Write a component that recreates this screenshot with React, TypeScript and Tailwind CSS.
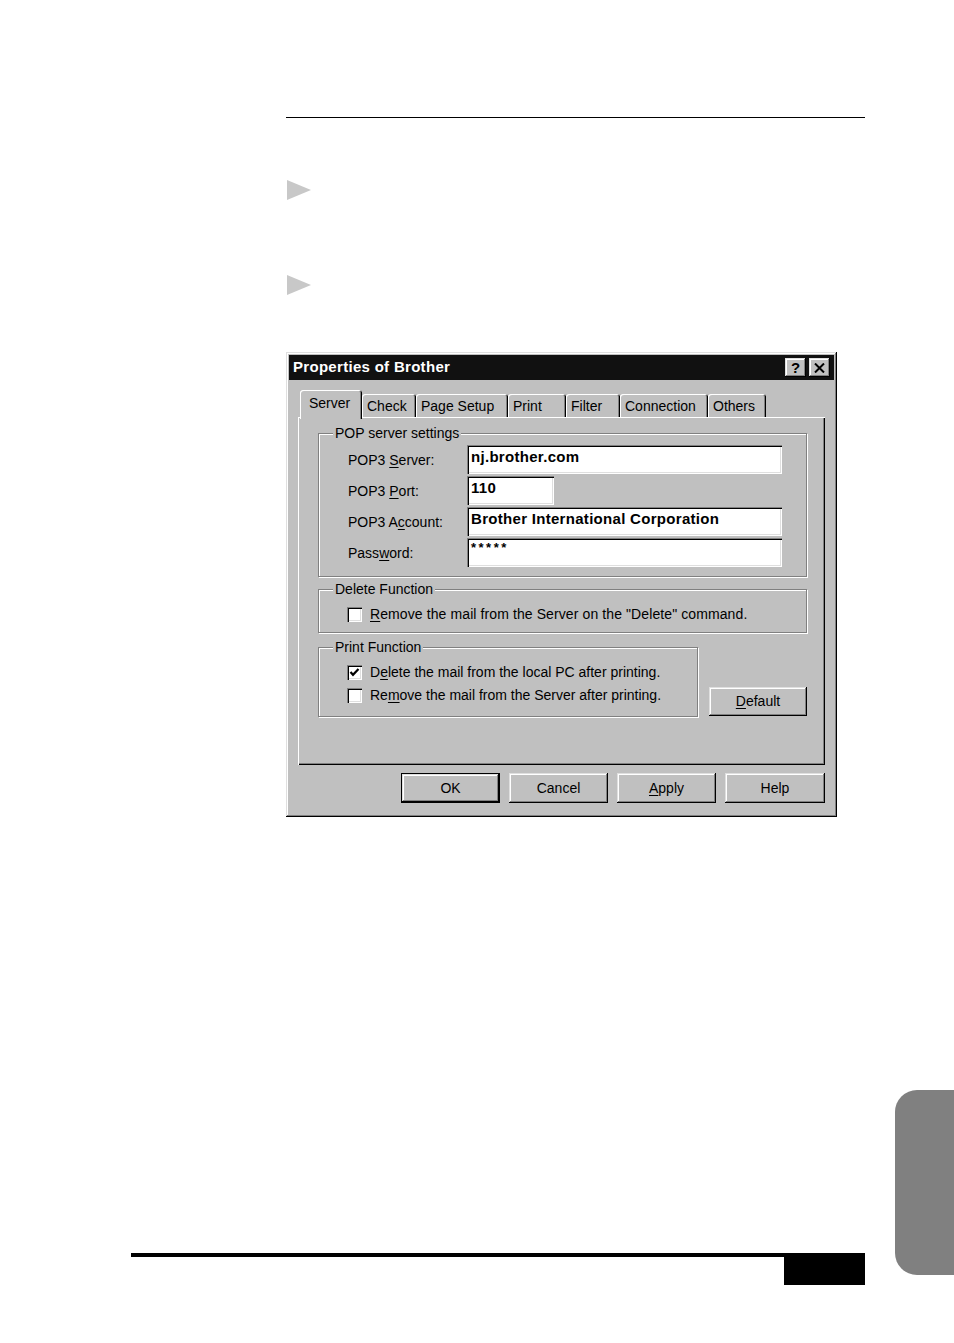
import React from "react";

const raised =
  "shadow-[inset_-1px_-1px_#000,inset_1px_1px_#dfdfdf,inset_-2px_-2px_#808080,inset_2px_2px_#fff]";
const sunken =
  "shadow-[inset_1px_1px_#808080,inset_2px_2px_#000,inset_-1px_-1px_#fff,inset_-2px_-2px_#dfdfdf]";

function U({ children }: { children: React.ReactNode }) {
  return <span className="underline underline-offset-2 decoration-1">{children}</span>;
}

function Triangle() {
  return (
    <svg width="25" height="20" viewBox="0 0 25 20" className="block">
      <polygon points="1,0 25,10 1,20" fill="#c8c8c8" />
    </svg>
  );
}

function TitleBtn({ children }: { children: React.ReactNode }) {
  return (
    <div className={`w-[21px] h-[19px] bg-[#c0c0c0] ${raised} flex items-center justify-center`}>
      {children}
    </div>
  );
}

function Tab({ label, w, selected }: { label: string; w: string; selected?: boolean }) {
  if (selected) {
    return (
      <div
        className={`${w} h-[29px] -mb-[2px] relative z-10 bg-[#c0c0c0] rounded-t-[3px] shadow-[inset_1px_1px_#fff,inset_-1px_0_#000,inset_-2px_0_#808080] pl-[9px] pt-[4px] text-left leading-[18px]`}
      >
        {label}
      </div>
    );
  }
  return (
    <div
      className={`${w} h-[23px] bg-[#c0c0c0] rounded-t-[3px] shadow-[inset_1px_1px_#fff,inset_-1px_0_#000,inset_-2px_0_#808080] pl-[5px] pt-[3px] leading-[18px]`}
    >
      {label}
    </div>
  );
}

function Checkbox({ checked }: { checked?: boolean }) {
  return (
    <div className={`w-[15px] h-[15px] bg-white ${sunken} flex items-center justify-center shrink-0`}>
      {checked && (
        <svg width="11" height="11" viewBox="0 0 11 11">
          <path d="M1.5 5 L4 7.8 L9.5 2" fill="none" stroke="#000" strokeWidth="2.2" />
        </svg>
      )}
    </div>
  );
}

function Field({ w, value }: { w: string; value: string }) {
  return (
    <div
      className={`${w} h-[29px] bg-white ${sunken} pl-[4px] pt-[3px] leading-[18px] font-bold text-[15px] tracking-[0.3px]`}
    >
      {value}
    </div>
  );
}

function Group({
  legend,
  className,
  children,
}: {
  legend: React.ReactNode;
  className: string;
  children: React.ReactNode;
}) {
  return (
    <fieldset
      className={`border border-[#808080] shadow-[inset_1px_1px_#fff,1px_1px_#fff] p-0 m-0 ${className}`}
    >
      <legend className="ml-[14px] px-[2px] bg-[#c0c0c0] leading-[16px]">{legend}</legend>
      {children}
    </fieldset>
  );
}

function Button({
  children,
  w = "w-[99px]",
  def,
}: {
  children: React.ReactNode;
  w?: string;
  def?: boolean;
}) {
  if (def) {
    return (
      <div className={`${w} h-[30px] border border-black bg-[#c0c0c0]`}>
        <div className={`w-full h-full ${raised} flex items-center justify-center`}>{children}</div>
      </div>
    );
  }
  return (
    <div className={`${w} h-[30px] bg-[#c0c0c0] ${raised} flex items-center justify-center`}>
      {children}
    </div>
  );
}

function Dialog() {
  return (
    <div
      className={`w-[551px] h-[465px] bg-[#c0c0c0] ${raised} p-[3px] flex flex-col text-[14px] text-black`}
    >
      <div className="h-[25px] bg-[#111] flex items-center pl-[4px] pr-[4px]">
        <span className="text-white font-bold text-[15px] tracking-[0.3px]">Properties of Brother</span>
        <div className="ml-auto flex gap-[3px]">
          <TitleBtn>
            <span className="font-bold text-[15px] leading-none">?</span>
          </TitleBtn>
          <TitleBtn>
            <svg width="11" height="10" viewBox="0 0 11 10">
              <path d="M1 0.5 L10 9.5 M10 0.5 L1 9.5" stroke="#000" strokeWidth="2" fill="none" />
            </svg>
          </TitleBtn>
        </div>
      </div>

      <div className="pl-[9px] mt-[10px]">
        <div className="flex items-end h-[27px] pl-[2px]">
          <Tab label="Server" w="w-[62px]" selected />
          <Tab label="Check" w="w-[54px]" />
          <Tab label="Page Setup" w="w-[92px]" />
          <Tab label="Print" w="w-[58px]" />
          <Tab label="Filter" w="w-[54px]" />
          <Tab label="Connection" w="w-[88px]" />
          <Tab label="Others" w="w-[58px]" />
        </div>

        <div className="w-[527px] h-[348px] bg-[#c0c0c0] shadow-[inset_1px_1px_#fff,inset_-1px_-1px_#000,inset_-2px_-2px_#808080] pt-[8px] pl-[20px] flex flex-col">
          <Group legend="POP server settings" className="w-[489px]">
            <div className="pl-[29px] pt-[4px] pb-[9px] flex flex-col gap-[2px]">
              <div className="flex items-center h-[29px]">
                <div className="w-[119px] pt-[1px]">
                  POP3 <U>S</U>erver:
                </div>
                <Field w="w-[315px]" value="nj.brother.com" />
              </div>
              <div className="flex items-center h-[29px]">
                <div className="w-[119px] pt-[1px]">
                  POP3 <U>P</U>ort:
                </div>
                <Field w="w-[87px]" value="110" />
              </div>
              <div className="flex items-center h-[29px]">
                <div className="w-[119px] pt-[1px]">
                  POP3 A<U>c</U>count:
                </div>
                <Field w="w-[315px]" value="Brother International Corporation" />
              </div>
              <div className="flex items-center h-[29px]">
                <div className="w-[119px] pt-[1px]">
                  Pass<U>w</U>ord:
                </div>
                <div
                  className={`w-[315px] h-[29px] bg-white ${sunken} pl-[4px] pt-[3px] leading-[14px] font-bold text-[13px] tracking-[2.5px]`}
                >
                  *****
                </div>
              </div>
            </div>
          </Group>

          <Group legend="Delete Function" className="w-[489px] mt-[4px]">
            <div className="pl-[28px] pt-[7px] pb-[8px]">
              <div className="flex items-center h-[20px] gap-[8px]">
                <Checkbox />
                <span className="tracking-[0.1px]">
                  <U>R</U>emove the mail from the Server on the "Delete" command.
                </span>
              </div>
            </div>
          </Group>

          <div className="flex items-end gap-[11px] mt-[6px]">
            <Group legend="Print Function" className="w-[380px]">
              <div className="pl-[28px] pt-[7px] pb-[11px] flex flex-col gap-[3px]">
                <div className="flex items-center h-[20px] gap-[8px]">
                  <Checkbox checked />
                  <span>
                    D<U>e</U>lete the mail from the local PC after printing.
                  </span>
                </div>
                <div className="flex items-center h-[20px] gap-[8px]">
                  <Checkbox />
                  <span>
                    Re<U>m</U>ove the mail from the Server after printing.
                  </span>
                </div>
              </div>
            </Group>
            <div
              className={`w-[98px] h-[29px] bg-[#c0c0c0] ${raised} flex items-center justify-center mb-[1px]`}
            >
              <span>
                <U>D</U>efault
              </span>
            </div>
          </div>
        </div>

        <div className="w-[527px] flex justify-end gap-[9px] mt-[8px]">
          <Button def>OK</Button>
          <Button>Cancel</Button>
          <Button>
            <span>
              <U>A</U>pply
            </span>
          </Button>
          <Button w="w-[100px]">Help</Button>
        </div>
      </div>
    </div>
  );
}

export default function App() {
  return (
    <div
      className="w-[954px] h-[1343px] bg-white overflow-hidden"
      style={{ fontFamily: '"Liberation Sans", Arial, sans-serif' }}
    >
      <div className="pt-[117px] pl-[286px]">
        <div className="w-[579px] h-px bg-black" />
        <div className="mt-[62px]">
          <Triangle />
        </div>
        <div className="mt-[75px]">
          <Triangle />
        </div>
        <div className="mt-[57px]">
          <Dialog />
        </div>
      </div>

      <div className="flex items-start mt-[273px]">
        <div className="ml-[131px] w-[734px] pt-[163px] flex flex-col items-end">
          <div className="w-[734px] h-[4px] bg-black" />
          <div className="w-[81px] h-[28px] bg-black" />
        </div>
        <div className="ml-[30px] w-[59px] h-[185px] bg-[#808080] rounded-l-[22px]" />
      </div>
    </div>
  );
}
